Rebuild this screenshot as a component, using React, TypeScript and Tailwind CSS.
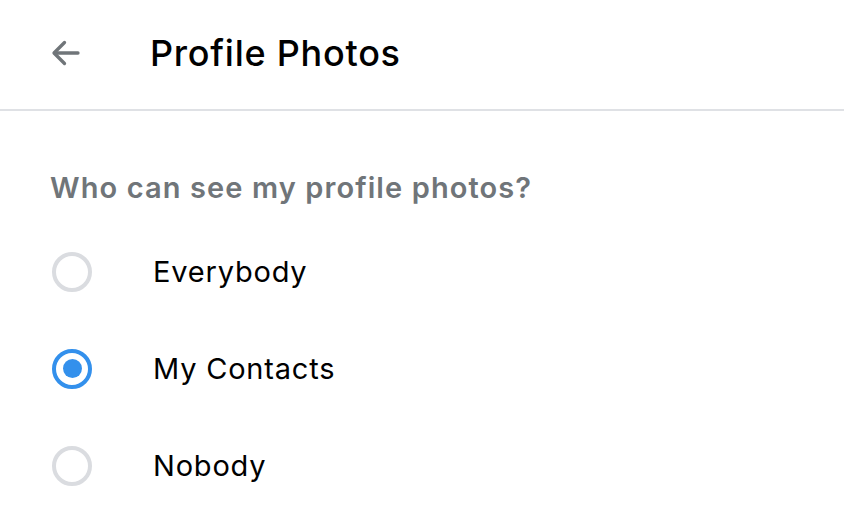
import React, { useState } from "react";

const options = ["Everybody", "My Contacts", "Nobody"];

export default function App() {
  const [sel, setSel] = useState("My Contacts");
  return (
    <div className="w-[844px] h-[532px] bg-white overflow-hidden" style={{ fontFamily: "Inter, Roboto, sans-serif" }}>
      <div className="h-[111px] flex items-center border-b-2 border-[#dfe1e5] pb-[4px]">
        <div className="w-[150px] flex items-center pl-[48px]">
          <svg width="36" height="36" viewBox="0 0 24 24" fill="none" stroke="#707579" strokeWidth="2.2" strokeLinecap="round" strokeLinejoin="round">
            <path d="M20 12H4.5" />
            <path d="M11 5l-7 7 7 7" />
          </svg>
        </div>
        <div className="text-[36px] font-medium text-black leading-none tracking-[0.75px]">Profile Photos</div>
      </div>
      <div className="pt-[62px] pl-[50px]">
        <div className="text-[29px] font-semibold text-[#707579] leading-none tracking-[1.1px]">Who can see my profile photos?</div>
        <div className="flex flex-col mt-[21px]">
          {options.map((o) => (
            <div key={o} className="h-[97px] flex items-center cursor-pointer" onClick={() => setSel(o)}>
              <div className="w-[103px] flex items-center pl-[2px]">
                {sel === o ? (
                  <div className="w-[40px] h-[40px] rounded-full border-[4px] border-[#3390ec] flex items-center justify-center">
                    <div className="w-[19px] h-[19px] rounded-full bg-[#3390ec]" />
                  </div>
                ) : (
                  <div className="w-[40px] h-[40px] rounded-full border-[4px] border-[#dadce0]" />
                )}
              </div>
              <div className="text-[29px] text-black leading-none tracking-[0.8px]">{o}</div>
            </div>
          ))}
        </div>
      </div>
    </div>
  );
}
